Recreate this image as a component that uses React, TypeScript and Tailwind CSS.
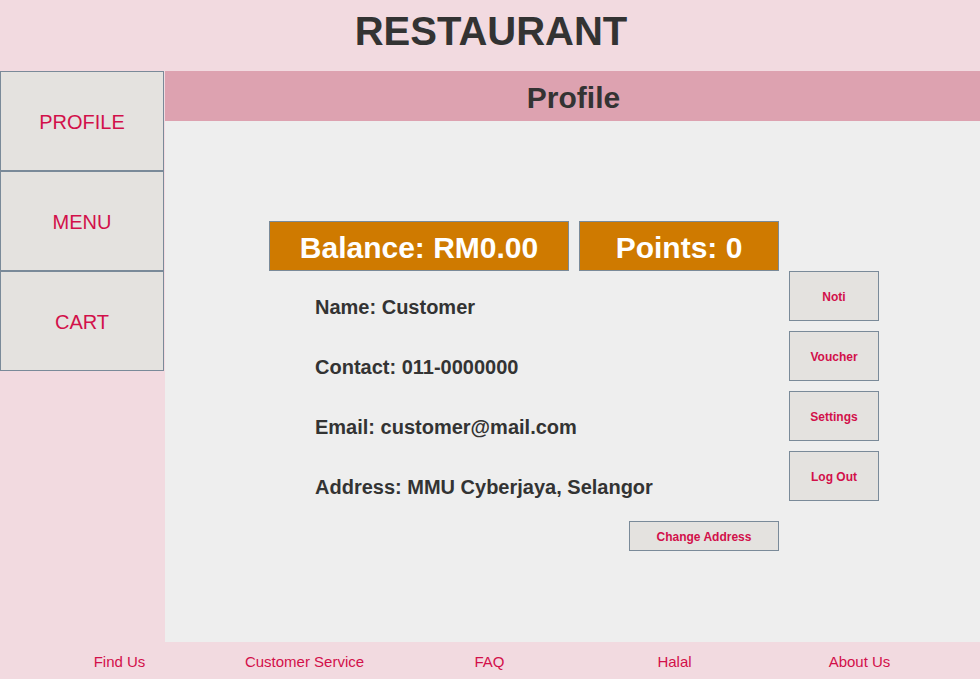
const SIDE = ['PROFILE', 'MENU', 'CART'];
const INFO = [
  'Name: Customer',
  'Contact: 011-0000000',
  'Email: customer@mail.com',
  'Address: MMU Cyberjaya, Selangor',
];
const ACTIONS = ['Noti', 'Voucher', 'Settings', 'Log Out'];
const FOOTER = ['Find Us', 'Customer Service', 'FAQ', 'Halal', 'About Us'];

export default function App() {
  return (
    <div
      className="w-[980px] h-[679px] bg-[#f2dae0] flex flex-col overflow-hidden"
      style={{ fontFamily: '"Liberation Sans", Arial, sans-serif' }}
    >
      {/* Header */}
      <header className="h-[71px] flex items-center justify-center">
        <h1 className="text-[40px] font-bold text-[#333333] leading-none pl-[2px] -mt-[9px]">RESTAURANT</h1>
      </header>

      <div className="flex flex-1 min-h-0">
        {/* Sidebar */}
        <nav className="w-[165px] flex flex-col">
          {SIDE.map((s) => (
            <button
              key={s}
              className="w-[164px] h-[100px] border border-[#7a8a99] bg-[#e4e2df] text-[#d2104a] text-[20px] flex items-center justify-center pt-[2px]"
            >
              {s}
            </button>
          ))}
        </nav>

        {/* Main */}
        <main className="flex-1 bg-[#eeeeee] flex flex-col">
          <div className="h-[50px] bg-[#dda2b0] flex items-center justify-center pt-[3px]">
            <h2 className="text-[30px] font-bold text-[#333333] pl-[2px]">Profile</h2>
          </div>

          <div className="flex pl-[104px] pt-[100px]">
            <div className="w-[510px] flex flex-col">
              <div className="flex gap-[10px]">
                <div className="w-[300px] h-[50px] bg-[#cf7a00] border border-[#7a8a99] flex items-center justify-center text-white font-bold text-[30px] pt-[2px]">
                  Balance: RM0.00
                </div>
                <div className="w-[200px] h-[50px] bg-[#cf7a00] border border-[#7a8a99] flex items-center justify-center text-white font-bold text-[30px] pt-[2px]">
                  Points: 0
                </div>
              </div>
              <div className="mt-[6px] pl-[46px] flex flex-col">
                {INFO.map((t) => (
                  <div key={t} className="h-[60px] flex items-center text-[20px] font-bold text-[#333333]">
                    {t}
                  </div>
                ))}
              </div>
              <button className="mt-[4px] ml-[360px] w-[150px] h-[30px] border border-[#7a8a99] bg-[#e4e2df] text-[#d2104a] text-[12px] font-bold flex items-center justify-center pt-[2px]">
                Change Address
              </button>
            </div>
            <div className="ml-[10px] mt-[50px] flex flex-col gap-[10px]">
              {ACTIONS.map((a) => (
                <button
                  key={a}
                  className="w-[90px] h-[50px] border border-[#7a8a99] bg-[#e4e2df] text-[#d2104a] text-[12px] font-bold flex items-center justify-center pt-[2px]"
                >
                  {a}
                </button>
              ))}
            </div>
          </div>
        </main>
      </div>

      {/* Footer */}
      <footer className="h-[37px] flex items-center pl-[27px] pt-[3px]">
        {FOOTER.map((f) => (
          <a key={f} className="w-[185px] text-center text-[15px] text-[#d2104a]">
            {f}
          </a>
        ))}
      </footer>
    </div>
  );
}
